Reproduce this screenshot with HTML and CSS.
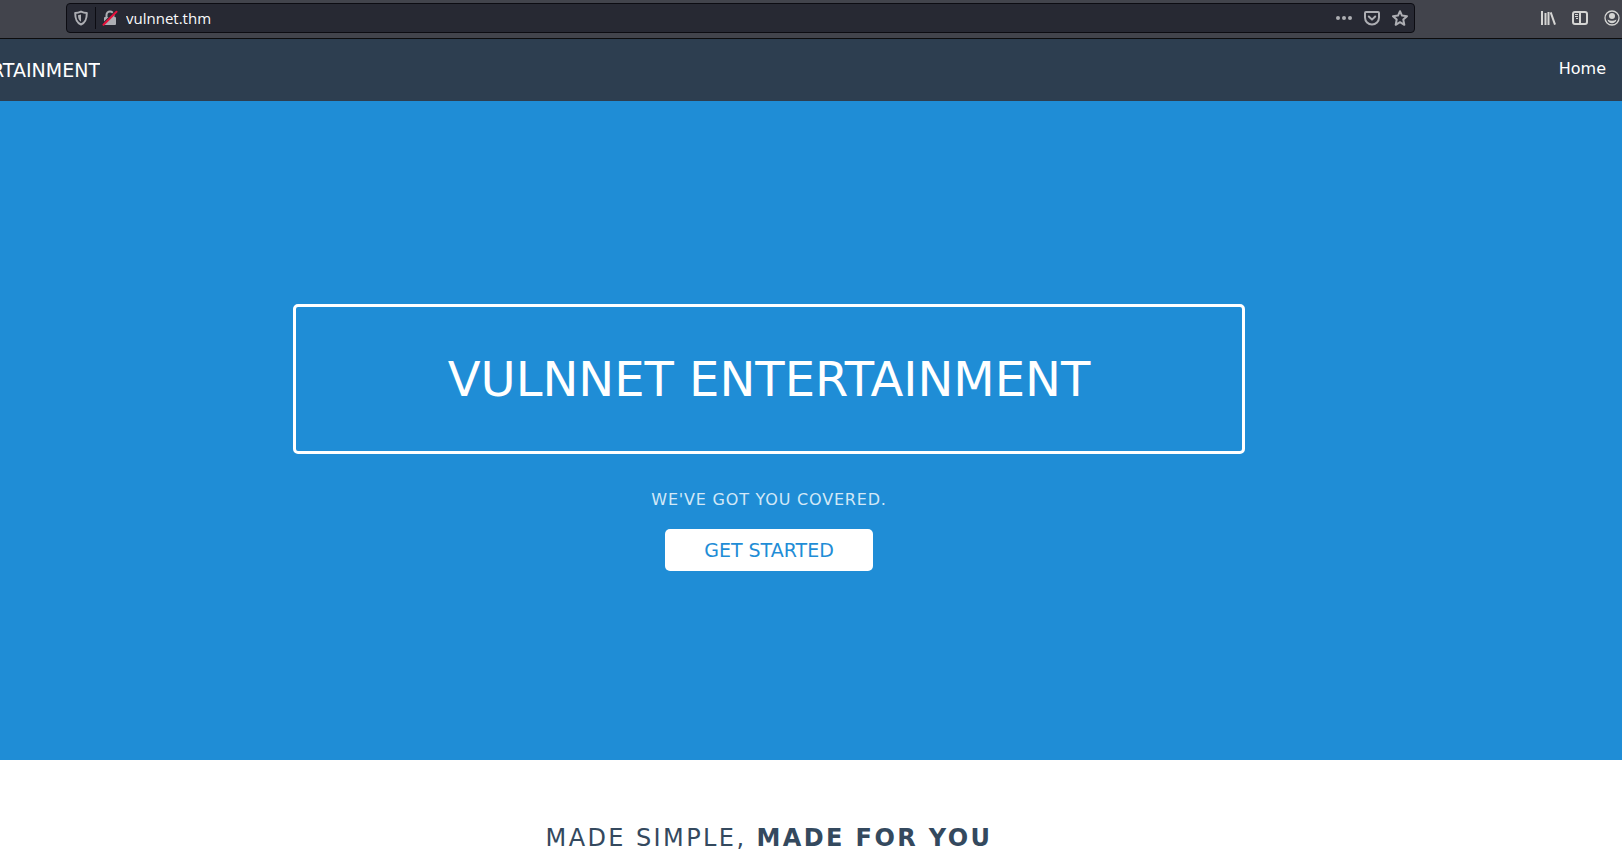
FILE: index.html
```
<!DOCTYPE html>
<html lang="en">
<head>
<meta charset="utf-8">
<meta name="viewport" content="width=device-width, initial-scale=1">
<title>VulnNet Entertainment</title>
<link rel="stylesheet" href="styles.css">
</head>
<body>
<div class="toolbar">
  <div class="urlbar">
    <button class="icon-button" type="button" aria-label="Tracking protection">
      <svg class="icon" viewBox="0 0 16 16"><path d="M8 1.6C6 2.5 4.2 2.9 2.2 3c0 6 1 9.500 5.800 11.500C12.800 12.500 13.800 9 13.800 3 11.800 2.900 10 2.500 8 1.600z" fill="none" stroke="currentColor" stroke-width="2" stroke-linejoin="round"/><path d="M8 4.500v7.300C5.600 10.300 5.100 8.300 5 5.300z" fill="currentColor"/></svg>
    </button>
    <span class="divider"></span>
    <button class="icon-button" type="button" aria-label="Connection not secure">
      <svg class="icon" viewBox="0 0 16 16"><path d="M4.500 8V5a3.500 3.500 0 0 1 7 0v3" fill="none" stroke="currentColor" stroke-width="2"/><rect x="2" y="7" width="12" height="8" rx="1" fill="currentColor"/><path d="M1 14 14 1" stroke="#272933" stroke-width="2"/><path d="M1.500 14.800 14.500 1.800" stroke="#e8113c" stroke-width="2" stroke-linecap="round"/></svg>
    </button>
    <input class="address" type="text" value="vulnnet.thm" aria-label="Address">
    <div class="urlbar-actions">
      <button class="icon-button" type="button" aria-label="Page actions">
        <svg class="icon" viewBox="0 0 16 16"><g fill="currentColor"><circle cx="2" cy="8" r="2"/><circle cx="8" cy="8" r="2"/><circle cx="14" cy="8" r="2"/></g></svg>
      </button>
      <button class="icon-button" type="button" aria-label="Save to Pocket">
        <svg class="icon" viewBox="0 0 16 16"><path d="M2 2h12a1 1 0 0 1 1 1v4.500a7 7 0 0 1-14 0V3a1 1 0 0 1 1-1z" fill="none" stroke="currentColor" stroke-width="2"/><path d="M4.800 6.500 8 9.600l3.200-3.100" fill="none" stroke="currentColor" stroke-width="2" stroke-linecap="round" stroke-linejoin="round"/></svg>
      </button>
      <button class="icon-button" type="button" aria-label="Bookmark this page">
        <svg class="icon" viewBox="0 0 16 16"><path d="M8 1.200 10 5.600l5 .6-3.700 3.400 1 5.200L8 12.200l-4.300 2.600 1-5.200L1 6.200l5-.6z" fill="none" stroke="currentColor" stroke-width="2" stroke-linejoin="round"/></svg>
      </button>
    </div>
  </div>
  <div class="toolbar-actions">
    <button class="icon-button" type="button" aria-label="Library">
      <svg class="icon" viewBox="0 0 16 16"><path d="M2 1v14M5.500 3v12M8.500 2v13M10.700 2.300l4.300 12.400" fill="none" stroke="currentColor" stroke-width="2"/></svg>
    </button>
    <button class="icon-button" type="button" aria-label="Sidebars">
      <svg class="icon" viewBox="0 0 16 16"><rect x="1" y="2" width="14" height="12" rx="2" fill="none" stroke="currentColor" stroke-width="2"/><path d="M8 2v12" stroke="currentColor" stroke-width="2"/><path d="M3 4.500h3M3 6.500h3M4 8.500h2" stroke="currentColor"/></svg>
    </button>
    <button class="icon-button" type="button" aria-label="Account">
      <svg class="icon" viewBox="0 0 16 16"><circle cx="8" cy="8" r="7" fill="none" stroke="currentColor" stroke-width="1.300"/><circle cx="8" cy="6" r="3" fill="currentColor"/><path d="M3.500 9.500Q8 12 12.500 9.500C12 12 10 13.300 8 13.300S4 12 3.500 9.500z" fill="currentColor"/></svg>
    </button>
  </div>
</div>
<nav class="menu">
  <div class="brand"><a class="brand-link" href="#">ENTERTAINMENT</a></div>
  <a class="menu-link" href="#">Home</a>
</nav>
<main class="page">
  <section class="splash">
    <h1 class="splash-head">VULNNET ENTERTAINMENT</h1>
    <p class="splash-subhead">WE'VE GOT YOU COVERED.</p>
    <a class="button-primary" href="#">GET STARTED</a>
  </section>
  <section class="content">
    <h2 class="content-head">MADE SIMPLE, <strong>MADE FOR YOU</strong></h2>
  </section>
</main>
</body>
</html>
```
FILE: styles.css
```
* {
  box-sizing: border-box;
}

body {
  margin: 0;
  min-height: 100vh;
  display: flex;
  flex-direction: column;
  overflow: hidden;
  background: #fff;
  font-family: "DejaVu Sans", sans-serif;
  font-size: 16px;
}

/* Browser toolbar */
.toolbar {
  display: flex;
  align-items: center;
  justify-content: space-between;
  padding: 3px 2px 5px 66px;
  background: #42444c;
  border-bottom: 1px solid #0c0c0d;
}

.urlbar {
  display: flex;
  align-items: center;
  flex: 1;
  margin-right: 125px;
  height: 30px;
  padding: 0 6px;
  border: 1px solid #0c0c12;
  border-radius: 4px;
  background: #272933;
  color: #adaeb3;
}

.icon-button {
  display: flex;
  padding: 0;
  border: 0;
  background: none;
  color: inherit;
}

.icon {
  width: 16px;
  height: 16px;
}

.divider {
  width: 1px;
  height: 22px;
  margin: 0 6px;
  background: #0c0c12;
}

.address {
  flex: 1;
  min-width: 0;
  margin-left: 8px;
  padding: 0;
  border: 0;
  background: none;
  color: #f9f9fa;
  font-family: "Open Sans", "Noto Sans", sans-serif;
  font-size: 15px;
}

.urlbar-actions {
  display: flex;
  gap: 12px;
}

.toolbar-actions {
  display: flex;
  gap: 16px;
  color: #d5d5d3;
}

/* Site menu */
.menu {
  display: flex;
  align-items: center;
  justify-content: space-between;
  height: 62px;
  background: #2d3e50;
}

.brand {
  display: flex;
  justify-content: flex-end;
  width: 100px;
  overflow: hidden;
}

.brand-link {
  color: #fff;
  font-size: 19px;
  text-decoration: none;
}

.menu-link {
  padding: 0 16px 4px;
  color: #fff;
  text-decoration: none;
}

/* Page body, scrolled sideways under the window */
.page {
  display: flex;
  flex: 1;
  flex-direction: column;
  margin-left: -84px;
}

.splash {
  display: flex;
  flex: 1;
  flex-direction: column;
  align-items: center;
  justify-content: center;
  background: #1f8dd6;
  padding-top: 14px;
}

.splash-head {
  margin: 0;
  padding: 48px 152px;
  border: 3px solid #fff;
  border-radius: 5px;
  color: #fff;
  font-size: 48px;
  font-weight: 400;
  line-height: 48px;
  text-align: center;
}

.splash-subhead {
  margin: 36px 0 20px;
  color: #d2e8f7;
  line-height: 19px;
  letter-spacing: 0.05em;
}

.button-primary {
  padding: 10px 39px;
  border-radius: 5px;
  background: #fff;
  color: #1f8dd6;
  font-size: 19px;
  line-height: 22px;
  text-decoration: none;
}

.content {
  padding: 64px 16px 9px;
  text-align: center;
}

.content-head {
  margin: 0;
  color: #34495e;
  font-size: 24px;
  font-weight: 400;
  line-height: 28px;
  letter-spacing: 0.1em;
}
```
